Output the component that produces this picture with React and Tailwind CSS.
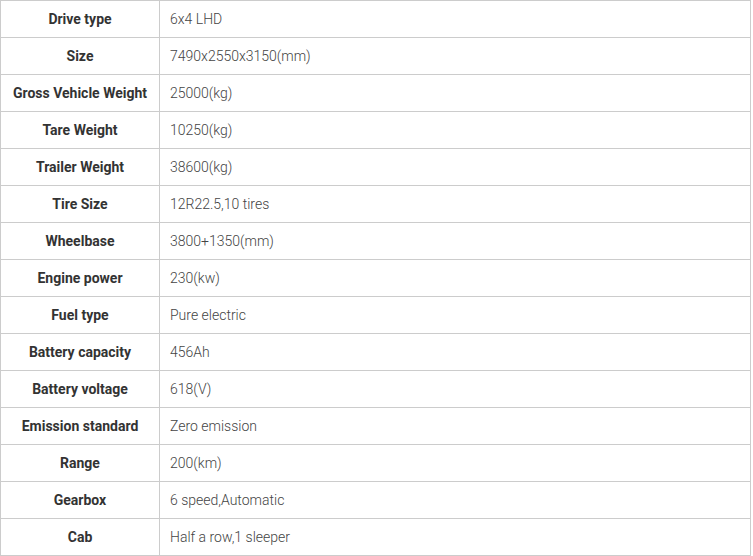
const rows = [
  ["Drive type", "6x4 LHD"],
  ["Size", "7490x2550x3150(mm)"],
  ["Gross Vehicle Weight", "25000(kg)"],
  ["Tare Weight", "10250(kg)"],
  ["Trailer Weight", "38600(kg)"],
  ["Tire Size", "12R22.5,10 tires"],
  ["Wheelbase", "3800+1350(mm)"],
  ["Engine power", "230(kw)"],
  ["Fuel type", "Pure electric"],
  ["Battery capacity", "456Ah"],
  ["Battery voltage", "618(V)"],
  ["Emission standard", "Zero emission"],
  ["Range", "200(km)"],
  ["Gearbox", "6 speed,Automatic"],
  ["Cab", "Half a row,1 sleeper"],
];

export default function App() {
  return (
    <div className="bg-white" style={{ fontFamily: "Roboto, 'Liberation Sans', sans-serif" }}>
      <table className="w-[751px] table-fixed border-collapse border border-[#cccccc] text-[14px]">
        <colgroup>
          <col className="w-[159px]" />
          <col />
        </colgroup>
        <tbody>
          {rows.map(([label, value]) => (
            <tr key={label} className="h-[37px]">
              <td className="border border-[#cccccc] p-0 text-center font-bold text-[#333333]">{label}</td>
              <td className="border border-[#cccccc] py-0 pl-[10px] font-light text-[#444444]">{value}</td>
            </tr>
          ))}
        </tbody>
      </table>
    </div>
  );
}
